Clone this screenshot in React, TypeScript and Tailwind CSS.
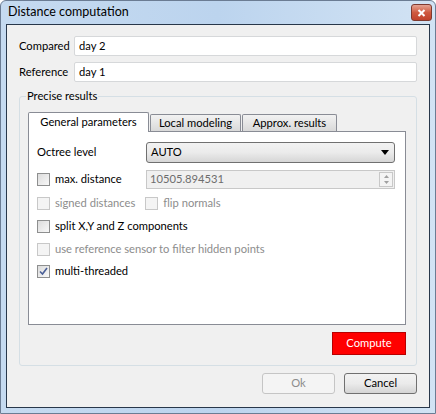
import React from "react";

const font = { fontFamily: 'Lato, "Noto Sans", "Liberation Sans", sans-serif' };

function Check({ checked = false, disabled = false }: { checked?: boolean; disabled?: boolean }) {
  return (
    <div
      className={
        "w-[13px] h-[13px] border flex items-center justify-center shrink-0 " +
        (disabled
          ? "border-[#c8c8c8] bg-[#f4f4f4]"
          : "border-[#8e8f8f] bg-gradient-to-br from-[#dcdcdc] to-[#f8f8f8]")
      }
    >
      {checked && (
        <svg width="9" height="9" viewBox="0 0 9 9">
          <path d="M1 4.5 L3.5 7 L8 1" stroke="#4a5f97" strokeWidth="1.6" fill="none" />
        </svg>
      )}
    </div>
  );
}

export default function App() {
  return (
    <div style={font} className="w-[436px] h-[414px] text-[11.2px] text-black">
      <div className="w-full h-full border border-[#6b7c93] rounded-t-[6px] bg-gradient-to-r from-[#c5daf0] via-[#bcd4ee] to-[#d2e3f4] flex flex-col">
        <div className="h-[23px] flex items-center pl-[7px] pr-[2px] relative">
          <span className="text-[12.5px] text-black">Distance computation</span>
          <div className="ml-auto mr-[1px] w-[21px] h-[17px] rounded-[3px] border border-[#7e3a30] bg-gradient-to-b from-[#e4a393] via-[#cf5a40] to-[#c0412b] flex items-center justify-center">
            <svg width="9" height="8" viewBox="0 0 9 8">
              <path d="M1.5 1 L7.5 7 M7.5 1 L1.5 7" stroke="white" strokeWidth="2" />
            </svg>
          </div>
        </div>
        <div className="flex-1 mx-[5px] mb-[5px] border border-[#28374a] bg-[#f0f0f0] flex flex-col px-[12px] pt-[11px]">
          <div className="flex items-center h-[20px]">
            <span className="w-[55px]">Compared</span>
            <div className="flex-1 h-[20px] border border-[#d6d8da] bg-white rounded-[2px] flex items-center px-[4px]">day 2</div>
          </div>
          <div className="flex items-center h-[20px] mt-[6px]">
            <span className="w-[55px]">Reference</span>
            <div className="flex-1 h-[20px] border border-[#d6d8da] bg-white rounded-[2px] flex items-center px-[4px]">day 1</div>
          </div>
          <div className="relative mt-[14px] h-[270px] border border-[#d5dfe5] rounded-[3px] pl-[8px] pr-[10px] pt-[14px] flex flex-col">
            <span className="absolute left-[6px] top-[-9px] bg-[#f0f0f0] px-[1px] leading-[16px]">Precise results</span>
            <div className="flex items-end h-[20px]">
              <div className="w-[121px] h-[20px] bg-white border border-[#898c95] border-b-0 flex items-center justify-center relative z-10 -mb-px pb-px rounded-t-[2px]">
                General parameters
              </div>
              <div className="w-[91px] h-[17px] ml-[1px] bg-gradient-to-b from-[#f2f2f2] to-[#d9d9d9] border border-[#898c95] border-b-0 flex items-center justify-center rounded-t-[2px]">
                Local modeling
              </div>
              <div className="w-[95px] h-[17px] ml-[1px] bg-gradient-to-b from-[#f2f2f2] to-[#d9d9d9] border border-[#898c95] border-b-0 flex items-center justify-center rounded-t-[2px]">
                Approx. results
              </div>
            </div>
            <div className="h-[194px] bg-white border border-[#898c95] flex flex-col pl-[8px] pr-[10px] pt-[10px]">
              <div className="flex items-center h-[21px]">
                <span className="w-[109px]">Octree level</span>
                <div className="flex-1 h-[21px] border border-[#707070] rounded-[3px] bg-gradient-to-b from-[#f2f2f2] via-[#ebebeb] to-[#d6d6d6] flex items-center px-[4px]">
                  <span>AUTO</span>
                  <svg className="ml-auto mr-[1px]" width="8" height="5" viewBox="0 0 8 5">
                    <path d="M0 0 H8 L4 5 Z" fill="black" />
                  </svg>
                </div>
              </div>
              <div className="flex items-center h-[19px] mt-[7px]">
                <div className="w-[109px] flex items-center gap-[5px]">
                  <Check />
                  <span>max. distance</span>
                </div>
                <div className="flex-1 h-[19px] border border-[#c8c8c8] bg-[#f0f0f0] flex items-center pl-[3px] pr-[1px] text-[#6d6d6d]">
                  <span>10505.894531</span>
                  <div className="ml-auto w-[14px] h-[15px] border border-[#c8c8c8] flex flex-col items-center justify-around bg-[#f4f4f4]">
                    <svg width="5" height="3" viewBox="0 0 5 3"><path d="M0 3 L2.5 0 L5 3 Z" fill="#a0a0a0" /></svg>
                    <svg width="5" height="3" viewBox="0 0 5 3"><path d="M0 0 L2.5 3 L5 0 Z" fill="#a0a0a0" /></svg>
                  </div>
                </div>
              </div>
              <div className="flex items-center h-[16px] mt-[6px] text-[#8d8d8d]">
                <div className="flex items-center gap-[5px]">
                  <Check disabled />
                  <span>signed distances</span>
                </div>
                <div className="flex items-center gap-[5px] ml-[10px]">
                  <Check disabled />
                  <span>flip normals</span>
                </div>
              </div>
              <div className="flex items-center gap-[5px] h-[16px] mt-[7px]">
                <Check />
                <span>split X,Y and Z components</span>
              </div>
              <div className="flex items-center gap-[5px] h-[16px] mt-[7px] text-[#8d8d8d]">
                <Check disabled />
                <span>use reference sensor to filter hidden points</span>
              </div>
              <div className="flex items-center gap-[5px] h-[16px] mt-[6px]">
                <Check checked />
                <span>multi-threaded</span>
              </div>
            </div>
            <div className="flex justify-end mt-[7px]">
              <div className="w-[74px] h-[23px] bg-[#ff0000] border border-[#b70000] flex items-center justify-center text-white">
                Compute
              </div>
            </div>
          </div>
          <div className="flex justify-end gap-[9px] mt-[7px]">
            <div className="w-[73px] h-[21px] border border-[#c5c5c5] rounded-[3px] bg-[#f4f4f4] flex items-center justify-center text-[#8d8d8d]">Ok</div>
            <div className="w-[73px] h-[21px] border border-[#707070] rounded-[3px] bg-gradient-to-b from-[#f2f2f2] via-[#ebebeb] to-[#d4d4d4] flex items-center justify-center">Cancel</div>
          </div>
        </div>
      </div>
    </div>
  );
}
